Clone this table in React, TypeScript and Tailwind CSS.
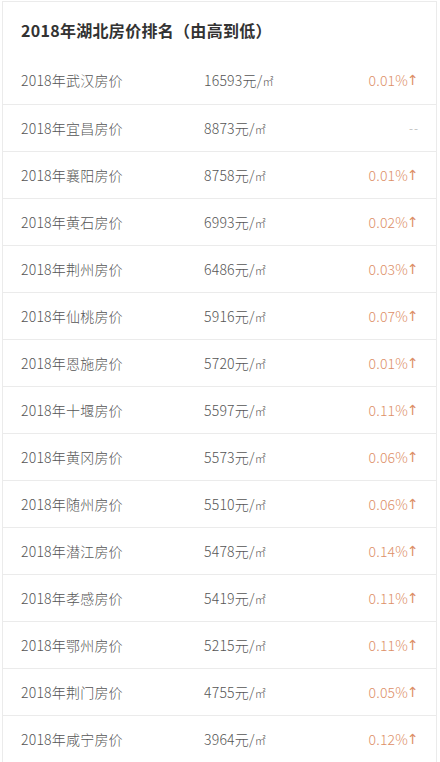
const rows: [string, string, string][] = [
  ["武汉", "16593", "0.01%"],
  ["宜昌", "8873", ""],
  ["襄阳", "8758", "0.01%"],
  ["黄石", "6993", "0.02%"],
  ["荆州", "6486", "0.03%"],
  ["仙桃", "5916", "0.07%"],
  ["恩施", "5720", "0.01%"],
  ["十堰", "5597", "0.11%"],
  ["黄冈", "5573", "0.06%"],
  ["随州", "5510", "0.06%"],
  ["潜江", "5478", "0.14%"],
  ["孝感", "5419", "0.11%"],
  ["鄂州", "5215", "0.11%"],
  ["荆门", "4755", "0.05%"],
  ["咸宁", "3964", "0.12%"],
];

export default function App() {
  return (
    <div
      className="w-[440px] h-[762px] overflow-hidden bg-white pt-px pl-[2px] pr-[3px]"
      style={{ fontFamily: '"Noto Sans CJK SC", "Open Sans", sans-serif' }}
    >
      <div className="border border-b-0 border-[#ebebeb]">
        {/* title */}
        <div className="h-[55px] flex items-center pl-[18px] text-[16px] font-bold text-[#333] tracking-[0.3px]">
          2018年湖北房价排名（由高到低）
        </div>

        {rows.map(([city, price, pct], i) => (
          <div
            key={city}
            className={
              "h-[47px] flex items-center pl-[18px] pr-[17px] text-[14px] font-light text-[#555] tracking-[0.2px] " +
              (i === 0 ? "" : "border-t border-[#ebebeb]")
            }
          >
            <span className="w-[183px]">2018年{city}房价</span>
            <span className="flex-1">
              {price}元/<span className="text-[11px]">㎡</span>
            </span>
            {pct ? (
              <span className="text-[#dd8f68] flex items-center">
                {pct}
                <span className="text-[14px] font-normal -ml-[1px]" style={{ fontFamily: '"DejaVu Sans", sans-serif' }}>
                  ↑
                </span>
              </span>
            ) : (
              <span className="text-[#aaa] text-[12px] tracking-[1px]">--</span>
            )}
          </div>
        ))}
      </div>
    </div>
  );
}
